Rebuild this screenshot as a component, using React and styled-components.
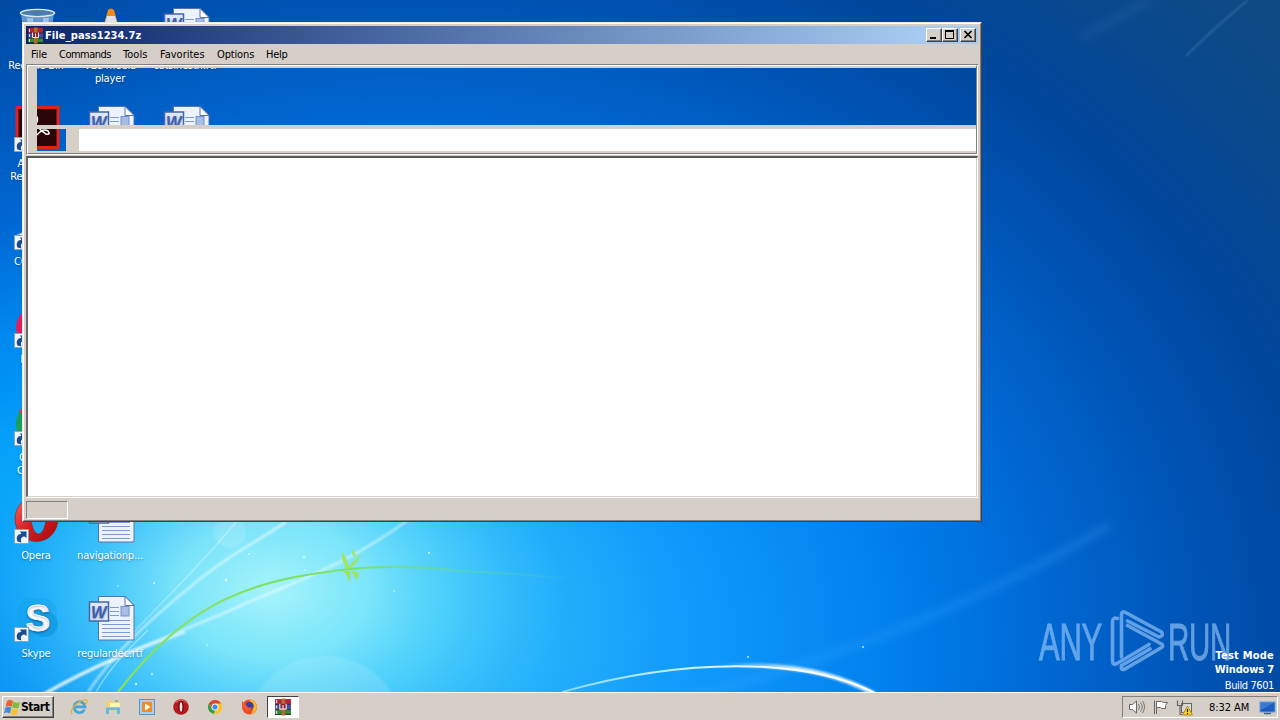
import React from "react";
import styled, { createGlobalStyle, css } from "styled-components";

const FACE = "#d6cfc8";
const UI = `"DejaVu Sans Condensed", "DejaVu Sans", sans-serif`;

const Global = createGlobalStyle`
  body { margin: 0; overflow: hidden; }
  * { box-sizing: border-box; }
`;

const Screen = styled.div`
  position: relative;
  display: flex;
  flex-direction: column;
  width: 1280px;
  height: 720px;
  overflow: hidden;
  font-family: ${UI};
  font-size: 11px;
  line-height: 13px;
  letter-spacing: -0.45px;
`;
const Desktop = styled.main`
  position: relative;
  flex: 1;
  min-height: 0;
  background: #0050b0;
`;
const Wall = styled.svg`
  position: absolute;
  left: 0;
  top: 0;
`;

/* ---------- desktop shortcuts ---------- */
const Shortcut = styled.div`
  position: absolute;
  left: ${(p) => p.$x}px;
  top: ${(p) => p.$y}px;
  width: 76px;
  display: flex;
  flex-direction: column;
  align-items: center;
  gap: 4px;
  color: #fff;
  text-align: center;
  white-space: pre-line;
  text-shadow: 0 1px 2px rgba(0, 40, 90, 0.5);
`;
const Caption = styled.span`
  letter-spacing: -0.15px;
  margin-left: -2px;
`;

const Arrow = () => (
  <g>
    <rect x="1.5" y="32.500" width="14" height="14" fill="#eef5fb" stroke="#8aa4bd" />
    <path d="M4.500 44.500 C2.500 40 5 36.500 8.500 37 L7 34.500 H13.500 V41 L11.500 39.500 C8.500 39.500 7 42 8.500 45.500Z" fill="#1c4a8e" />
  </g>
);
const art = {
  bin: (
    <g>
      <path d="M8 5 L12 46 H36 L41 5Z" fill="#7ea9d2" opacity=".8" />
      <path d="M14 11 L17 46 H22 L20 11Z M30 11 L30 46 L36 11Z" fill="#c8dff0" opacity=".6" />
      <ellipse cx="24.500" cy="6" rx="17" ry="3.600" fill="#4d7cae" stroke="#dceaf5" strokeWidth="1.400" />
    </g>
  ),
  cone: (
    <g>
      <path d="M21 3 Q24 0 27 3 L38 42 H10Z" fill="#f28a1a" />
      <path d="M20 9 H28 L31.500 21 H16.500Z" fill="#dfe3e8" />
      <path d="M14 31 H34 L36 38 H12Z" fill="#eee" />
    </g>
  ),
  word: (
    <g>
      <path d="M11.500 1.500 H38 L47 10 V45 H11.500Z" fill="#edf3fd" stroke="#5472ae" />
      <path d="M38 1.500 V10.500 H47Z" fill="#fff" stroke="#5472ae" />
      <path d="M23 12.500 H32 M23 16.500 H32 M23 20.500 H32 M15 25.500 H43 M15 29.500 H43 M15 33.500 H43 M15 37.500 H43 M15 41.500 H43" stroke="#7d9bcf" />
      <rect x="34" y="11.500" width="8" height="9.500" fill="#a7bde4" stroke="#7490c8" />
      <rect x="2.500" y="7" width="19" height="19" fill="#dfe8f8" stroke="#4565ac" strokeWidth="1.500" />
      <text
        x="4" y="22.500" fontFamily='"Liberation Sans", sans-serif' fontSize="17" fontWeight="bold" fontStyle="italic"
        fill="#3f5fb0" textLength="15.500" lengthAdjust="spacingAndGlyphs" letterSpacing="0"
      >W</text>
    </g>
  ),
  pdf: (
    <g>
      <rect x="4" y="2.500" width="41" height="40" fill="#2a0508" stroke="#e2231a" strokeWidth="3" />
      <path d="M21 8 Q27 13 23 19 M24 30 Q30 23 35 26 Q38 30 33 29 Q28 26 24 21" fill="none" stroke="#fff" strokeWidth="1.500" />
      <Arrow />
    </g>
  ),
  home: (
    <g>
      <path d="M2 33 L24 23 L46 33 V46 H8Z" fill="#e8edf3" stroke="#a0a8b4" />
      <Arrow />
    </g>
  ),
  fox: (
    <g>
      <path d="M25 2 C10 6 2 18 3 29 C6 40 14 46 25 46Z" fill="#e31e5b" />
      <path d="M25 8 C14 14 9 20 9 32 L25 38Z" fill="#ff4b31" />
      <Arrow />
    </g>
  ),
  chrome: (
    <g>
      <circle cx="25" cy="25" r="22" fill="#1d9d58" />
      <path d="M6 13 A22 22 0 0 1 44 13 L25 25Z" fill="#e33b2e" />
      <Arrow />
    </g>
  ),
  opera: (
    <g>
      <path
        d="M2 22 A21.500 22.500 0 1 0 45 22 A21.500 22.500 0 1 0 2 22Z M18 20 A7.500 17 0 1 1 33 20 A7.500 17 0 1 1 18 20Z"
        fill="url(#operaRed)" fillRule="evenodd" stroke="#9c1114" strokeWidth=".6"
      />
      <Arrow />
    </g>
  ),
  skype: (
    <g>
      <rect x="4" y="3" width="40" height="39" rx="14" fill="#0a9be0" opacity=".25" />
      <circle cx="32" cy="29" r="13" fill="#0792d5" opacity=".5" />
      <text
        x="12.500" y="36" fontFamily='"Liberation Sans", sans-serif' fontSize="37" fontWeight="bold"
        fill="#fff" stroke="#fff" strokeWidth=".8" letterSpacing="0"
      >S</text>
      <Arrow />
    </g>
  ),
};
const shortcuts = [
  [-1, 7, "bin", "Recycle Bin"],
  [73, 7, "cone", "VLC media\nplayer"],
  [148, 7, "word", "catsinesth.rtf"],
  [-1, 105, "pdf", "Acrobat\nReader DC"],
  [73, 105, "word", ""],
  [148, 105, "word", ""],
  [-1, 203, "home", "CCleaner"],
  [-1, 301, "fox", "Firefox"],
  [-1, 399, "chrome", "Google\nChrome"],
  [-1, 497, "opera", "Opera"],
  [73, 497, "word", "navigationp..."],
  [-1, 595, "skype", "Skype"],
  [73, 595, "word", "regulardec.rtf"],
];

function Wallpaper() {
  return (
    <Wall width="1280" height="692" viewBox="0 0 1280 692">
      <defs>
        <radialGradient id="sky" gradientUnits="userSpaceOnUse" cx="0" cy="0" r="1" gradientTransform="translate(400 640) scale(1235 985)">
          <stop offset="0" stopColor="#2cb8fb" />
          <stop offset=".1" stopColor="#25affb" />
          <stop offset=".24" stopColor="#109afb" />
          <stop offset=".4" stopColor="#0080ee" />
          <stop offset=".52" stopColor="#0069d4" />
          <stop offset=".65" stopColor="#0053b4" />
          <stop offset=".75" stopColor="#00479c" />
          <stop offset=".95" stopColor="#104a82" />
        </radialGradient>
        <radialGradient id="glow" gradientUnits="userSpaceOnUse" cx="0" cy="0" r="1" gradientTransform="translate(272 590) scale(390 280)">
          <stop offset="0" stopColor="#a6f4fa" />
          <stop offset=".25" stopColor="#86ecfa" stopOpacity=".88" />
          <stop offset=".5" stopColor="#58dbfb" stopOpacity=".55" />
          <stop offset=".75" stopColor="#30c0fb" stopOpacity=".2" />
          <stop offset="1" stopColor="#28b8fb" stopOpacity="0" />
        </radialGradient>
        <radialGradient id="left" gradientUnits="userSpaceOnUse" cx="0" cy="0" r="1" gradientTransform="translate(0 480) scale(180 260)">
          <stop offset="0" stopColor="#00a6fa" stopOpacity=".85" />
          <stop offset=".5" stopColor="#009cfa" stopOpacity=".55" />
          <stop offset="1" stopColor="#0088e8" stopOpacity="0" />
        </radialGradient>
        <linearGradient id="stem">
          <stop offset="0" stopColor="#8be052" />
          <stop offset=".5" stopColor="#7be070" />
          <stop offset="1" stopColor="#50d0c0" stopOpacity="0" />
        </linearGradient>
        <linearGradient id="arc">
          <stop offset="0" stopColor="#8adcff" />
          <stop offset=".5" stopColor="#d8f4ff" />
          <stop offset="1" stopColor="#fff" />
        </linearGradient>
        <linearGradient id="thick">
          <stop offset="0" stopColor="#fff" stopOpacity="0" />
          <stop offset=".5" stopColor="#fff" />
        </linearGradient>
        <linearGradient id="operaRed" x2="1" y2="1">
          <stop offset="0" stopColor="#ff6a60" />
          <stop offset=".5" stopColor="#d51c1f" />
          <stop offset="1" stopColor="#a00c10" />
        </linearGradient>
        <filter id="soft" x="-20%" y="-20%" width="140%" height="140%"><feGaussianBlur stdDeviation="1" /></filter>
        <filter id="haze" x="-20%" y="-20%" width="140%" height="140%"><feGaussianBlur stdDeviation="4" /></filter>
      </defs>
      <rect width="1280" height="692" fill="url(#sky)" />
      <rect width="1280" height="692" fill="url(#left)" />
      <rect width="1280" height="692" fill="url(#glow)" />
      <g fill="none" stroke="#fff">
        <path d="M650 706 Q900 650 1110 525" stroke="#48b4ff" strokeWidth="8" opacity=".22" filter="url(#haze)" />
        <path d="M1080 38 L1150 0" stroke="#6aa8d8" strokeWidth="8" opacity=".1" filter="url(#haze)" />
        <path d="M1186 56 Q1214 28 1248 0" stroke="#6da4cf" strokeWidth="1.600" opacity=".4" filter="url(#soft)" />
        <path d="M44 694 C110 656 180 633 240 606 S345 566 408 520" strokeWidth="2.500" opacity=".5" filter="url(#soft)" />
        <path d="M44 694 C100 662 140 648 185 632" strokeWidth="3" opacity=".65" filter="url(#soft)" />
        <path d="M88 692 C118 648 150 620 190 587 S250 546 286 522" strokeWidth="2.200" opacity=".6" filter="url(#soft)" />
        <path d="M130 636 C160 604 200 566 236 522" strokeWidth="1.500" opacity=".3" />
        <path d="M96 692 C112 664 132 646 148 630" strokeWidth="1.200" opacity=".45" />
        <circle cx="230" cy="532" r="16" fill="#fff" stroke="none" opacity=".13" filter="url(#soft)" />
        <circle cx="325" cy="736" r="80" fill="#fff" opacity=".12" stroke="none" filter="url(#soft)" />
        <path d="M562 692 C640 670 710 664 765 667 C815 670 850 680 877 694" stroke="url(#arc)" strokeWidth="1.800" />
        <path d="M720 666 C790 662 840 674 876 695" stroke="url(#thick)" strokeWidth="4.500" opacity=".8" filter="url(#soft)" />
      </g>
      <path d="M118 692 C190 600 250 580 350 569 Q400 564 460 571 Q530 574 580 580" fill="none" stroke="url(#stem)" strokeWidth="2.200" />
      <path
        d="M342 552 Q341 565 349 566 L346 558Z M352 549 Q351 556 356 557 Q355 552 352 549Z M344 565 Q346 571 352 567 L360 559 Q351 561 350 566Z M355 559 L361 554 L357 560Z M342 571 L350 571 L350 583 L346 574Z M350 570 L359 573 L357 580Z"
        fill="#a6e24a" opacity=".9"
      />
      <g fill="#fff" opacity=".75">
        {[[226, 580, 1.400], [154, 583, 1], [304, 557, 1], [305, 570, 0.800], [136, 684, 1.200], [429, 553, 1], [394, 591, 0.800], [748, 657, 1], [863, 647, 1], [249, 554, 1], [152, 674, 1], [118, 586, 0.800], [207, 645, 0.800]].map(([x, y, r]) => (
          <circle key={x + "-" + y} cx={x} cy={y} r={r} />
        ))}
      </g>
    </Wall>
  );
}

/* ---------- watermark ---------- */
const Brand = styled.div`
  position: absolute;
  left: 1037px;
  top: 608px;
`;
const Build = styled.div`
  position: absolute;
  right: 6px;
  top: 649px;
  color: #fff;
  text-align: right;
  font-weight: bold;
  line-height: 14px;
  display: flex;
  flex-direction: column;
`;
const BuildLine = styled.span`
  letter-spacing: ${(p) => p.$track}px;
`;
const BuildNo = styled.span`
  font-weight: normal;
  margin-top: 2px;
  letter-spacing: -0.4px;
`;

/* ---------- archive window ---------- */
const edge = (tl, br) => css`
  border-style: solid;
  border-width: 1px;
  border-color: ${tl} ${br} ${br} ${tl};
`;
const Outer = styled.section`
  position: absolute;
  left: 22px;
  top: 22px;
  width: 960px;
  height: 500px;
  display: flex;
  ${edge("#ece9e4", "#404448")}
`;
const Inner = styled.div`
  flex: 1;
  display: flex;
  ${edge("#ffffff", "#808080")}
`;
const Frame = styled.div`
  flex: 1;
  min-width: 0;
  display: flex;
  flex-direction: column;
  border: 2px solid ${FACE};
`;
const TitleBar = styled.header`
  display: flex;
  align-items: center;
  height: 18px;
  padding: 0 2px 0 1px;
  background: linear-gradient(90deg, #0a246a, #a6caf0 94%);
  color: #fff;
  font-weight: bold;
`;
const TitleText = styled.span`
  flex: 1;
  margin-left: 1px;
  letter-spacing: 0.1px;
`;
const CaptionButton = styled.button`
  width: 16px;
  height: 14px;
  padding: 0;
  margin-left: ${(p) => p.$gap || 0}px;
  background: ${FACE};
  display: flex;
  ${edge("#fff", "#404040")}
  box-shadow: inset -1px -1px 0 #808080;
`;
const MenuBar = styled.nav`
  display: flex;
  height: 20px;
  padding: 4px 0 0 5px;
  background: ${FACE};
  gap: 12px;
`;
const MenuItem = styled.span`
  width: ${(p) => p.$w}px;
  letter-spacing: ${(p) => p.$track ?? -0.35}px;
  white-space: nowrap;
`;
const Rebar = styled.div`
  height: 92px;
  display: flex;
  flex-direction: column;
  border-top: 1px solid #808080;
  border-bottom: 1px solid ${FACE};
`;
const RebarEdge = styled.div`
  flex: 1;
  display: flex;
  flex-direction: column;
  border-left: 1px solid #808080;
  border-right: 1px solid #fff;
  border-bottom: 1px solid #fff;
`;
const RebarBody = styled.div`
  flex: 1;
  display: flex;
  border: 1px solid #808080;
  border-top-color: #fff;
  border-left-color: #fff;
`;
const Grip = styled.div`
  width: 9px;
  background: ${FACE};
`;
const Bands = styled.div`
  flex: 1;
  display: flex;
  flex-direction: column;
  border-top: 2px solid ${FACE};
  border-bottom: 2px solid ${FACE};
`;
const UnpaintedToolbar = styled.div`
  height: 57px;
`;
const BandGap = styled.div`
  height: 4px;
  background: ${FACE};
`;
const AddressBand = styled.div`
  flex: 1;
  display: flex;
`;
const UnpaintedButton = styled.div`
  width: 29px;
`;
const AddressEdge = styled.div`
  width: 13px;
  background: ${FACE};
`;
const Address = styled.div`
  flex: 1;
  background: #fff;
`;
const List = styled.div`
  flex: 1;
  background: #fff;
  border-style: solid;
  border-width: 2px 1px 1px 2px;
  border-color: #585858 #fff ${FACE} #686868;
  box-shadow: inset -1px 0 0 ${FACE};
`;
const StatusBar = styled.footer`
  height: 21px;
  padding: 4px 0 0;
  border-top: 1px solid #fff;
  background: ${FACE};
  display: flex;
`;
const StatusCell = styled.div`
  width: 42px;
  height: 18px;
  margin-top: -1px;
  ${edge("#808080", "#fff")}
`;

function Books({ size = 17 }) {
  return (
    <svg width={size} height={size} viewBox="0 0 17 17">
      <path d="M1 1 H16 V6 H1Z" fill="#b3203a" />
      <path d="M1 6 H16 V11 H1Z" fill="#3d50a8" />
      <path d="M1 11 H16 V16 H1Z" fill="#2d8c36" />
      <path d="M1 6 H16 M1 11 H16 M1 15.500 H16" stroke="#2a1a2c" strokeWidth=".8" />
      <path d="M2.500 2 V5 M2.500 7 V10 M2.500 12 V15" stroke="#e6dfe2" />
      <rect x="7" y="0.500" width="3.500" height="16" fill="#b56a2c" />
      <rect x="5" y="5.500" width="7" height="5.500" fill="#8c2638" />
      <path d="M5.500 5.500 V10.500 H11.500 V5.500 M8.500 6.500 V10.500" stroke="#f2e8e0" fill="none" />
    </svg>
  );
}

function ArchiveWindow() {
  return (
    <Outer>
      <Inner>
        <Frame>
          <TitleBar>
            <Books />
            <TitleText>File_pass1234.7z</TitleText>
            <CaptionButton>
              <svg width="13" height="11"><path d="M3 8 H9 V10 H3Z" /></svg>
            </CaptionButton>
            <CaptionButton>
              <svg width="13" height="11"><path d="M2 1 H11 V10 H2Z M3 3 V9 H10 V3Z" fillRule="evenodd" /></svg>
            </CaptionButton>
            <CaptionButton $gap={2}>
              <svg width="13" height="11"><path d="M3.500 2 L10.500 9 M10.500 2 L3.500 9" stroke="#000" strokeWidth="1.700" /></svg>
            </CaptionButton>
          </TitleBar>
          <MenuBar>
            <MenuItem $w={16} $track={-0.1}>File</MenuItem>
            <MenuItem $w={52} $track={-0.5}>Commands</MenuItem>
            <MenuItem $w={25} $track={0.05}>Tools</MenuItem>
            <MenuItem $w={45} $track={0}>Favorites</MenuItem>
            <MenuItem $w={37} $track={-0.15}>Options</MenuItem>
            <MenuItem $w={22} $track={-0.3}>Help</MenuItem>
          </MenuBar>
          <Rebar>
            <RebarEdge>
              <RebarBody>
                <Grip />
                <Bands>
                  <UnpaintedToolbar />
                  <BandGap />
                  <AddressBand>
                    <UnpaintedButton />
                    <AddressEdge />
                    <Address />
                  </AddressBand>
                </Bands>
              </RebarBody>
            </RebarEdge>
          </Rebar>
          <List />
          <StatusBar>
            <StatusCell />
          </StatusBar>
        </Frame>
      </Inner>
    </Outer>
  );
}

/* ---------- taskbar ---------- */
const TaskBar = styled.footer`
  position: relative;
  display: flex;
  align-items: flex-start;
  height: 28px;
  padding: 3px 2px 0 2px;
  background: ${FACE};
  border-top: 1px solid #fff;
`;
const StartButton = styled.button`
  display: flex;
  align-items: center;
  width: 52px;
  height: 22px;
  padding: 0 0 0 1px;
  gap: 0;
  background: ${FACE};
  font: bold 12px ${UI};
  letter-spacing: -0.45px;
  color: #000;
  ${edge("#fff", "#404040")}
  box-shadow: inset -1px -1px 0 #808080;
`;
const Pinned = styled.div`
  display: flex;
  align-items: center;
  gap: 16px;
  height: 22px;
  margin-left: 16px;
`;
const Running = styled.div`
  display: flex;
  align-items: center;
  justify-content: center;
  width: 32px;
  height: 22px;
  margin-left: 9px;
  background: #fff;
  ${edge("#404040", "#fff")}
`;
const Tray = styled.div`
  display: flex;
  align-items: center;
  height: 22px;
  width: 156px;
  margin-left: auto;
  padding-left: 5px;
  ${edge("#808080", "#fff")}
`;
const Clock = styled.span`
  width: 42px;
  margin-left: 16px;
  letter-spacing: -0.05px;
  white-space: nowrap;
`;
const TrayIcon = styled.svg`
  flex: none;
  margin-left: ${(p) => p.$gap || 0}px;
`;

const Flag = () => (
  <svg width="17" height="17" viewBox="0 0 17 17">
    <path d="M3 2 Q6 0 9 2 L7.500 8 Q5 6 1.500 8Z" fill="#e8642a" />
    <path d="M9.500 2.500 Q12 4.500 16 3 L14.500 9 Q11 10 8 8.200Z" fill="#7fbe3c" />
    <path d="M1.300 8.700 Q5 7 7.300 8.700 L6 14.500 Q3 12.500 0 14.300Z" fill="#3f8fdc" />
    <path d="M7.900 9.200 Q11 11 14.200 10 L12.800 15.500 Q9 17 6.400 15Z" fill="#f6c32e" />
  </svg>
);
const Ico = (props) => <svg width="18" height="18" viewBox="0 0 18 18">{props.children}</svg>;

function Bar() {
  return (
    <TaskBar>
      <StartButton><Flag />Start</StartButton>
      <Pinned>
        <Ico>
          <path d="M14.500 11.500 A5.500 5.500 0 1 1 15 8.800 H5" fill="none" stroke="#3fa4e0" strokeWidth="2.800" />
          <path d="M2 16 C-1 11 10 1 16.500 2 C18 3 16 6 15 7" fill="none" stroke="#e3b338" strokeWidth="1.300" />
        </Ico>
        <Ico>
          <path d="M2 4 L3 2.500 H8 L9 4 H15 V13 H2Z" fill="#ecd27a" />
          <path d="M6 5 H16 V9 H6Z" fill="#fbf3bd" />
          <path d="M2 16 V9.500 H16 V16 H13 V12 H5 V16Z" fill="#6fb7e2" />
          <path d="M11 3 H14" stroke="#4b9f5c" />
        </Ico>
        <Ico>
          <rect x="1.500" y="1.500" width="15" height="15" fill="#aacfee" stroke="#5b95c9" />
          <rect x="4" y="4" width="10" height="10" rx="1" fill="#f5891d" />
          <path d="M7 5.500 V12.500 L12.500 9Z" fill="#fff" />
        </Ico>
        <Ico>
          <circle cx="9" cy="9" r="7.800" fill="#b81920" />
          <path d="M3.500 5 Q9 -1 14.500 5" stroke="#e96d6b" fill="none" />
          <ellipse cx="9" cy="9" rx="2" ry="5.300" fill="#f1e6e4" stroke="#6d0508" strokeWidth="1.200" />
        </Ico>
        <Ico>
          <circle cx="9" cy="9" r="7" fill="#fbc21c" />
          <path d="M2.900 5.600 A7 7 0 0 1 15.100 5.600 H9 L6 10.500Z" fill="#de4436" />
          <path d="M2.900 5.600 L6 11 L9 12.300 L7.800 15.900 A7 7 0 0 1 2.900 5.600" fill="#2aa152" />
          <circle cx="9" cy="9" r="3.500" fill="#fff" />
          <circle cx="9" cy="9" r="2.600" fill="#4389ee" />
        </Ico>
        <Ico>
          <circle cx="9.500" cy="9" r="7.500" fill="#ee4a26" />
          <path d="M9 1.500 Q16 2 17 9 Q16 15 11 16.500 Q15 10 9 1.500" fill="#fbb527" />
          <circle cx="9.500" cy="8" r="4.200" fill="#3b3a9e" />
          <path d="M2 3 Q1 12 7 13 Q11 13 12 9 Q8 11 7 8 L5 6Z" fill="#f4592b" />
        </Ico>
      </Pinned>
      <Running><Books size={18} /></Running>
      <Tray>
        <TrayIcon width="18" height="16" viewBox="0 0 18 16">
          <path d="M1.500 5.500 H4.500 L8.500 2 V14 L4.500 10.500 H1.500Z" fill="#fff" stroke="#666" />
          <path d="M10.500 5 Q12.500 8 10.500 11 M12.500 3.500 Q16 8 12.500 12.500 M14.500 2 Q18.500 8 14.500 14" fill="none" stroke="#777" />
        </TrayIcon>
        <TrayIcon $gap={6} width="18" height="16" viewBox="0 0 18 16">
          <path d="M2.500 1.500 V15 M4.500 2 V15" stroke="#666" />
          <path d="M4.500 2.500 H9.500 Q11 4 15.500 3.500 L13.500 6.500 L13.500 9.500 H9.500 L8.500 8.500 H4.500Z" fill="#fff" stroke="#666" />
        </TrayIcon>
        <TrayIcon $gap={6} width="17" height="17" viewBox="0 0 17 17">
          <rect x="5.500" y="4.500" width="10" height="9" fill="#d8d8d8" stroke="#666" />
          <path d="M1.500 1.500 V6.500 H6.500 V1.500 M4 7 V15.500 H9" fill="none" stroke="#666" strokeWidth="1.200" />
          <path d="M11.500 7 L16.500 16 H6.500Z" fill="#f8ce22" stroke="#b7921b" />
          <path d="M11.500 10 V13 M11.500 14 V15.200" stroke="#222" strokeWidth="1.200" />
        </TrayIcon>
        <Clock>8:32 AM</Clock>
        <TrayIcon $gap={8} width="17" height="15" viewBox="0 0 17 15">
          <rect x="1" y="2" width="15" height="10" fill="#1c5dc0" stroke="#6a9be0" />
          <path d="M1 2 H16 L4 9 L1 10Z" fill="#4d8de0" opacity=".6" />
          <path d="M5 13.500 H12" stroke="#435f87" strokeWidth="1.500" />
        </TrayIcon>
      </Tray>
    </TaskBar>
  );
}

const Logo = () => (
  <svg width="204" height="70" viewBox="0 0 204 70" fill="none">
    <g opacity=".58">
      <g stroke="#a9d2ff" strokeWidth="3.600" strokeLinejoin="round" strokeLinecap="round">
        <path d="M80.500 10.500 Q75.500 9 75.500 14 V53 Q75.500 57.500 80 55.500 L112 36.500" />
        <path d="M84.500 49 V6.500 Q84.500 2.500 88.500 4.500 L124.500 24 Q127 28 122 29 L90.500 13" />
        <path d="M90.500 17.500 L124.500 36 Q127 38 124.500 39.500 L88 61 Q83.500 63 84.500 57.500 L113 41" />
      </g>
      <g fill="#a9d2ff" stroke="#a9d2ff" strokeWidth="1" fontFamily='"Liberation Sans", sans-serif' fontSize="52">
        <text x="2" y="51.500" textLength="63" lengthAdjust="spacingAndGlyphs">ANY</text>
        <text x="131" y="51.500" textLength="63" lengthAdjust="spacingAndGlyphs">RUN</text>
      </g>
    </g>
  </svg>
);

export default function App() {
  return (
    <Screen>
      <Global />
      <Desktop>
        <Wallpaper />
        {shortcuts.map(([x, y, kind, label]) => (
          <Shortcut key={x + "-" + y} $x={x} $y={y}>
            <svg width="48" height="48" viewBox="0 0 48 48">{art[kind]}</svg>
            <Caption>{label}</Caption>
          </Shortcut>
        ))}
        <Brand><Logo /></Brand>
        <Build>
          <BuildLine $track={0.22}>Test Mode</BuildLine>
          <BuildLine $track={-0.15}>Windows 7</BuildLine>
          <BuildNo>Build 7601</BuildNo>
        </Build>
        <ArchiveWindow />
      </Desktop>
      <Bar />
    </Screen>
  );
}
